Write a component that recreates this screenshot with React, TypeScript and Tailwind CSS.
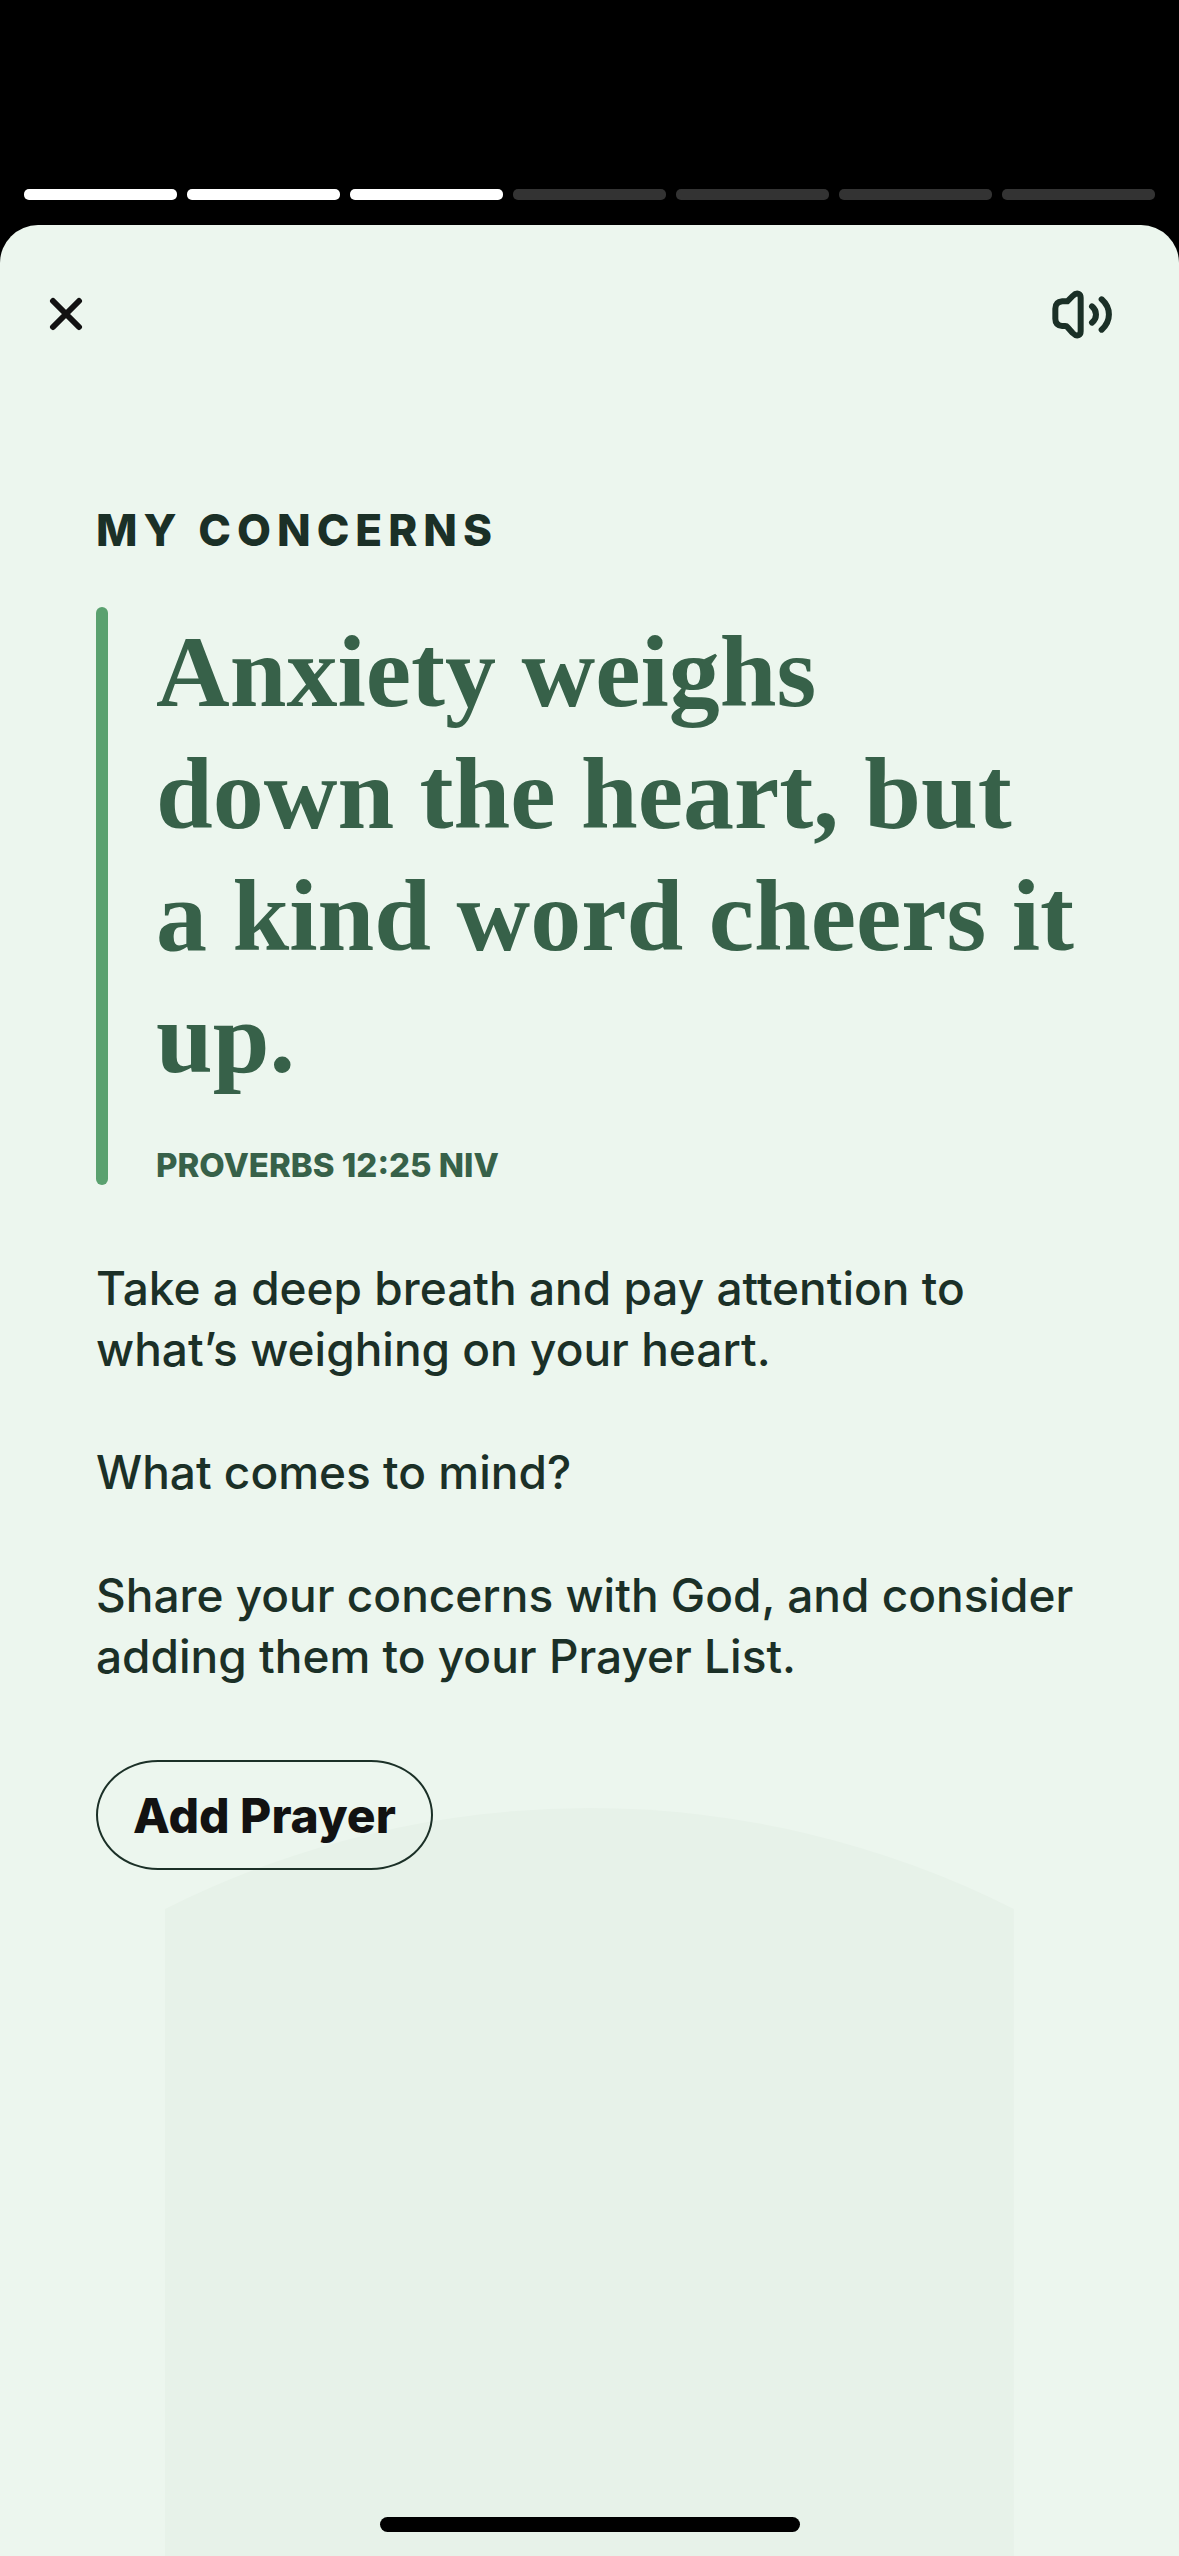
const STEPS = [true, true, true, false, false, false, false];

function CloseIcon() {
  return (
    <svg viewBox="0 0 34 34" className="size-[34px]" fill="none" stroke="#121212" strokeWidth="6" strokeLinecap="round" aria-hidden="true">
      <path d="M4 4L30 30M30 4L4 30" />
    </svg>
  );
}

function SpeakerIcon() {
  return (
    <svg viewBox="0 0 180 147" className="h-[49px] w-[60px]" fill="none" stroke="#1b3027" strokeWidth="18" strokeLinecap="round" strokeLinejoin="round" aria-hidden="true">
      <path d="M46 34L62 18Q72 8 79 11Q86 14 86 23V124Q86 133 79 136Q72 139 62 129L46 111Q44 108 40 108H31Q10 106 10 86V56Q10 36 31 34Z" />
      <path d="M120 49C136 62 136 85 120 98" />
      <path d="M149 28C178 54 178 93 149 119" />
    </svg>
  );
}

export default function App() {
  return (
    <div className="flex min-h-screen flex-col bg-black font-['Inter',sans-serif] text-[#1b3027]">
      <div className="flex gap-[10px] px-6 pt-[189px] pb-[25px]" role="progressbar" aria-label="Story progress" aria-valuemin={0} aria-valuemax={7} aria-valuenow={3}>
        {STEPS.map((done, i) => (
          <span key={i} className={done ? "h-[11px] flex-1 rounded-[5px] bg-white" : "h-[11px] flex-1 rounded-[5px] bg-[#333333]"} />
        ))}
      </div>

      <main className="relative isolate flex flex-1 flex-col overflow-hidden rounded-t-[38px] bg-[#ecf6ee]">
        <svg viewBox="0 0 849 748" className="absolute bottom-0 left-[14%] -z-10 w-[72%]" fill="#e7f2e9" aria-hidden="true">
          <path d="M0 101A943 943 0 0 1 849 101V748H0Z" />
        </svg>

        <header className="flex items-center justify-between pt-[48px] pr-[55px] pl-[37px]">
          <button type="button" aria-label="Close" className="flex size-[58px] items-center justify-center">
            <CloseIcon />
          </button>
          <button type="button" aria-label="Play audio" className="flex h-[82px] w-[84px] items-center justify-center">
            <SpeakerIcon />
          </button>
        </header>

        <section className="flex flex-col items-start px-24 pt-[148px]">
          <h1 className="text-[44px] leading-[54px] font-extrabold tracking-[6px]">MY CONCERNS</h1>

          <blockquote className="mt-[50px] flex gap-12 text-[#376149]">
            <span className="w-3 shrink-0 rounded-full bg-[#5aa16f]" />
            <div className="-mr-10 pt-1">
              <p className="font-['Liberation_Serif',serif] text-[102px] leading-[122px] font-bold">
                Anxiety weighs
                <br />
                down the heart, but
                <br />
                a kind word cheers it
                <br />
                up.
              </p>
              <cite className="mt-[46px] block text-[33px] leading-[40px] font-extrabold not-italic">PROVERBS 12:25 NIV</cite>
            </div>
          </blockquote>

          <div className="-mr-10 mt-[73px] flex flex-col gap-[62px] text-[46px] leading-[61px] font-medium">
            <p>
              Take a deep breath and pay attention to
              <br />
              what’s weighing on your heart.
            </p>
            <p>What comes to mind?</p>
            <p>
              Share your concerns with God, and consider
              <br />
              adding them to your Prayer List.
            </p>
          </div>

          <button type="button" className="mt-[73px] h-[110px] rounded-[62px/55px] border-2 border-[#1b3027] px-[35px] text-[48px] leading-[61px] font-extrabold text-[#121212]">
            Add Prayer
          </button>
        </section>

        <div className="mx-auto mt-auto mb-6 h-[15px] w-[420px] rounded-full bg-black" />
      </main>
    </div>
  );
}
